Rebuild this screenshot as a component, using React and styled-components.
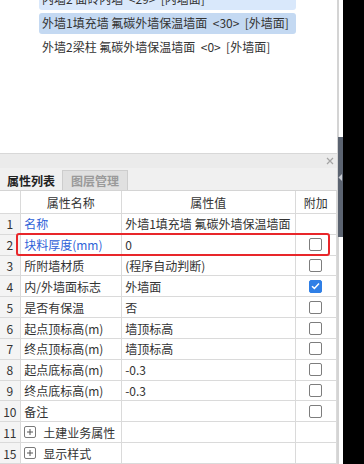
import React from 'react';
import styled, { createGlobalStyle } from 'styled-components';

const GlobalStyle = createGlobalStyle`
  html, body {
    margin: 0;
    padding: 0;
    background: #000;
  }
  body {
    font-family: "Noto Sans CJK SC", "Noto Sans", sans-serif;
    font-size: 12px;
    color: #333;
  }
`;

const Screen = styled.div`
  display: flex;
  height: 464px;
  overflow: hidden;
`;

const Main = styled.div`
  width: 337px;
  display: flex;
  flex-direction: column;
  background: #fff;
`;

const Divider = styled.div`
  width: 2px;
  background: #d4d4d4;
`;

const Side = styled.div`
  width: 4px;
  background: #fff;
  padding-top: 137px;
  box-sizing: border-box;
`;

const Handle = styled.div`
  width: 5px;
  height: 100px;
  margin-left: -1px;
  background: #5b6370;
  display: flex;
  align-items: flex-start;
  padding-top: 37px;
  box-sizing: border-box;
`;

const ListArea = styled.div`
  height: 156px;
  border-bottom: 1px solid #d8d8d8;
  overflow: hidden;
  padding-left: 39px;
`;

const List = styled.div`
  width: 257px;
  margin-top: -11px;
  display: flex;
  flex-direction: column;
  gap: 3.3px;
`;

const Item = styled.div`
  height: 20.7px;
  line-height: 20.7px;
  padding-left: 3px;
  border-radius: 3px;
  white-space: pre;
  color: #333;
  background: ${(p) => (p.$tone === 'selected' ? '#c4d9f2' : p.$tone === 'hover' ? '#d9e8fb' : 'transparent')};
`;

const PanelBar = styled.div`
  height: 14px;
  background: #ebebeb;
  display: flex;
  justify-content: flex-end;
  align-items: center;
  padding-right: 3px;
`;

const TabBar = styled.div`
  height: 24px;
  background: #f0f0f0;
  display: flex;
  align-items: flex-end;
  border-bottom: 1px solid #d4d4d4;
  box-sizing: border-box;
`;

const Tab = styled.div`
  height: 20px;
  box-sizing: border-box;
  width: ${(p) => (p.$active ? '62px' : '66px')};
  display: flex;
  align-items: center;
  justify-content: center;
  font-weight: 700;
  font-size: 12px;
  color: ${(p) => (p.$active ? '#222' : '#9a9a9a')};
  background: ${(p) => (p.$active ? '#f0f0f0' : '#e0e0e0')};
  border: ${(p) => (p.$active ? 'none' : '1px solid #cdcdcd')};
  border-bottom: none;
`;

const Table = styled.div`
  display: grid;
  grid-template-columns: 20.7px 101px 174px 41.3px;
`;

const Cell = styled.div`
  height: ${(p) => (p.$head ? '22.5px' : '20.85px')};
  box-sizing: border-box;
  border-right: 1px solid #dadada;
  border-bottom: 1px solid #dadada;
  display: flex;
  align-items: center;
  justify-content: ${(p) => (p.$center ? 'center' : 'flex-start')};
  padding-left: ${(p) => (p.$center ? '0' : '3.5px')};
  white-space: nowrap;
  overflow: hidden;
  position: relative;
  color: ${(p) => (p.$blue ? '#2f62d8' : '#333')};
  background: ${(p) => (p.$num ? '#f4f4f4' : '#fff')};
  overflow: visible;
`;

const Highlight = styled.div`
  position: absolute;
  top: -1.5px;
  bottom: -1.5px;
  left: 16px;
  width: 314px;
  border: 2px solid #e8262a;
  border-radius: 3px;
  box-sizing: border-box;
  pointer-events: none;
  z-index: 2;
`;

const Check = styled.div`
  width: 13px;
  height: 13px;
  box-sizing: border-box;
  border-radius: 2px;
  border: 1px solid ${(p) => (p.$on ? '#2f7fe6' : '#7d7d7d')};
  background: ${(p) => (p.$on ? '#2f7fe6' : '#fff')};
  display: flex;
  align-items: center;
  justify-content: center;
`;

const Expand = styled.span`
  width: 12px;
  height: 12px;
  box-sizing: border-box;
  border: 1px solid #7a7a7a;
  border-radius: 2px;
  display: inline-flex;
  align-items: center;
  justify-content: center;
  margin-right: 7px;
`;

const CloseIcon = () => (
  <svg width="8" height="8" viewBox="0 0 8 8">
    <path d="M1 1L7 7M7 1L1 7" stroke="#a4a4a4" strokeWidth="1.2" />
  </svg>
);

const Tick = () => (
  <svg width="9" height="8" viewBox="0 0 9 8">
    <path d="M1 4.2L3.4 6.4L8 1.4" stroke="#fff" strokeWidth="1.5" fill="none" />
  </svg>
);

const Plus = () => (
  <svg width="8" height="8" viewBox="0 0 8 8">
    <path d="M4 1V7M1 4H7" stroke="#555" strokeWidth="1" />
  </svg>
);

const rows = [
  { n: 1, name: '名称', value: '外墙1填充墙 氟碳外墙保温墙面', blue: true },
  { n: 2, name: '块料厚度(mm)', value: '0', blue: true, check: 'off', mark: true },
  { n: 3, name: '所附墙材质', value: '(程序自动判断)', check: 'off' },
  { n: 4, name: '内/外墙面标志', value: '外墙面', check: 'on' },
  { n: 5, name: '是否有保温', value: '否', check: 'off' },
  { n: 6, name: '起点顶标高(m)', value: '墙顶标高', check: 'off' },
  { n: 7, name: '终点顶标高(m)', value: '墙顶标高', check: 'off' },
  { n: 8, name: '起点底标高(m)', value: '-0.3', check: 'off' },
  { n: 9, name: '终点底标高(m)', value: '-0.3', check: 'off' },
  { n: 10, name: '备注', value: '', check: 'off' },
  { n: 11, name: '土建业务属性', value: '', group: true },
  { n: 15, name: '显示样式', value: '', group: true },
];

const App = () => {
  return (
    <Screen>
      <GlobalStyle />
      <Main>
        <ListArea>
          <List>
            <Item $tone="hover">内墙2 面砖内墙  &lt;29&gt;  [内墙面]</Item>
            <Item $tone="selected">外墙1填充墙 氟碳外墙保温墙面  &lt;30&gt;  [外墙面]</Item>
            <Item>外墙2梁柱 氟碳外墙保温墙面  &lt;0&gt;  [外墙面]</Item>
          </List>
        </ListArea>
        <PanelBar>
          <CloseIcon />
        </PanelBar>
        <TabBar>
          <Tab $active>属性列表</Tab>
          <Tab>图层管理</Tab>
        </TabBar>
        <Table>
          <Cell $head $center />
          <Cell $head $center>属性名称</Cell>
          <Cell $head $center>属性值</Cell>
          <Cell $head $center>附加</Cell>
          {rows.map((r) => (
            <React.Fragment key={r.n}>
              <Cell $num $center>
                {r.n}
                {r.mark && <Highlight />}
              </Cell>
              <Cell $blue={r.blue}>
                {r.group && (
                  <Expand>
                    <Plus />
                  </Expand>
                )}
                {r.name}
              </Cell>
              <Cell>{r.value}</Cell>
              <Cell $center>
                {r.check && <Check $on={r.check === 'on'}>{r.check === 'on' && <Tick />}</Check>}
              </Cell>
            </React.Fragment>
          ))}
        </Table>
      </Main>
      <Divider />
      <Side>
        <Handle>
          <svg width="4" height="7" viewBox="0 0 4 7">
            <path d="M4 0L0.5 3.5L4 7Z" fill="#c9ccd2" />
          </svg>
        </Handle>
      </Side>
    </Screen>
  );
};

export default App;
